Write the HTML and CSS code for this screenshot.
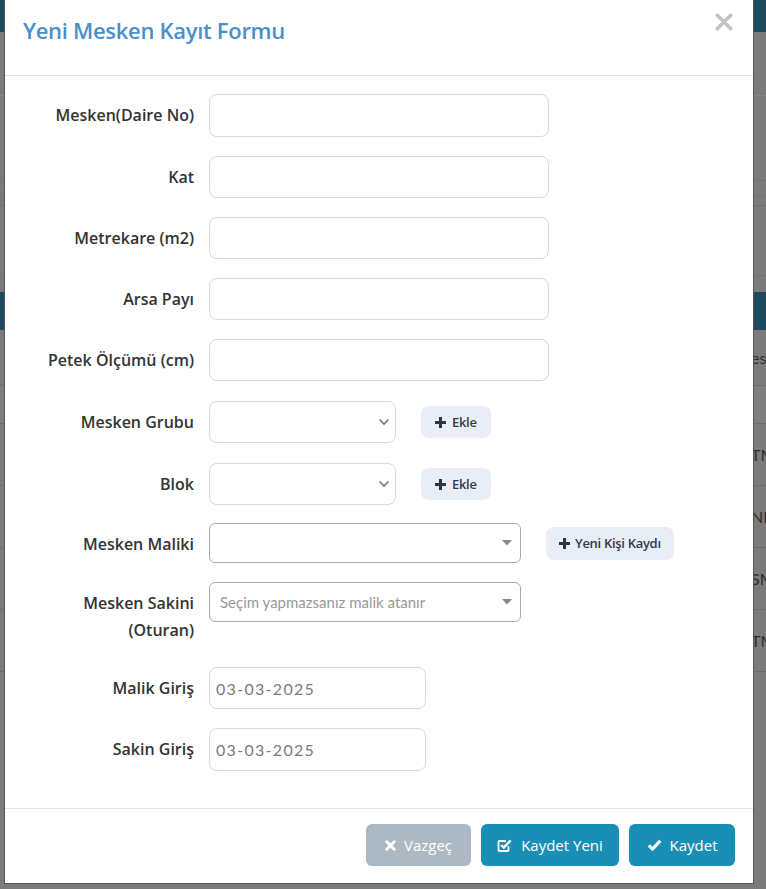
FILE: index.html
```html
<!DOCTYPE html>
<html lang="tr">
<head>
<meta charset="utf-8">
<title>Yeni Mesken Kayıt Formu</title>
<link rel="stylesheet" href="styles.css">
</head>
<body>
<div class="bg-page">
  <div class="bg-nav"></div>
  <div class="bg-s bg-s1"></div>
  <div class="bg-s bg-s2"></div>
  <div class="bg-s bg-s3"></div>
  <div class="bg-s bg-s4"></div>
  <div class="bg-s bg-s5"></div>
  <div class="bg-s bg-s6"></div>
  <div class="bg-band"></div>
  <div class="bg-row bg-head"><span>es</span></div>
  <div class="bg-row bg-filter"></div>
  <div class="bg-row"><span>TM</span></div>
  <div class="bg-row"><span>NES</span></div>
  <div class="bg-row"><span>SM</span></div>
  <div class="bg-row"><span>TM</span></div>
</div>

<div class="modal">
  <div class="modal-header">
    <h4 class="modal-title">Yeni Mesken Kayıt Formu</h4>
    <button class="close" type="button" aria-label="Kapat">
      <svg width="18" height="18" viewBox="0 0 18 18"><path d="M2.5 2.5 L15.5 15.5 M15.5 2.5 L2.5 15.5" stroke="#c2c2c2" stroke-width="3.4" stroke-linecap="square"/></svg>
    </button>
  </div>

  <div class="modal-body">
    <div class="frow first">
      <label class="flabel">Mesken(Daire No)</label>
      <input class="fc fc-text fc-tall" type="text">
    </div>
    <div class="frow">
      <label class="flabel">Kat</label>
      <input class="fc fc-text" type="text">
    </div>
    <div class="frow">
      <label class="flabel">Metrekare (m2)</label>
      <input class="fc fc-text" type="text">
    </div>
    <div class="frow">
      <label class="flabel">Arsa Payı</label>
      <input class="fc fc-text" type="text">
    </div>
    <div class="frow">
      <label class="flabel">Petek Ölçümü (cm)</label>
      <input class="fc fc-text" type="text">
    </div>
    <div class="frow sel-row">
      <label class="flabel">Mesken Grubu</label>
      <div class="ctl-line">
        <div class="fc fc-select">
          <svg class="chev" width="12" height="8" viewBox="0 0 12 8"><path d="M1.5 1.5 L6 6 L10.5 1.5" fill="none" stroke="#777" stroke-width="1.6"/></svg>
        </div>
        <button class="btn-add" type="button"><svg width="11" height="11" viewBox="0 0 11 11"><path d="M4 0h3v4h4v3H7v4H4V7H0V4h4z" fill="#2b3545"/></svg>Ekle</button>
      </div>
    </div>
    <div class="frow sel-row">
      <label class="flabel">Blok</label>
      <div class="ctl-line">
        <div class="fc fc-select">
          <svg class="chev" width="12" height="8" viewBox="0 0 12 8"><path d="M1.5 1.5 L6 6 L10.5 1.5" fill="none" stroke="#777" stroke-width="1.6"/></svg>
        </div>
        <button class="btn-add" type="button"><svg width="11" height="11" viewBox="0 0 11 11"><path d="M4 0h3v4h4v3H7v4H4V7H0V4h4z" fill="#2b3545"/></svg>Ekle</button>
      </div>
    </div>
    <div class="frow tight">
      <label class="flabel">Mesken Maliki</label>
      <div class="ctl-line">
        <div class="fc fc-s2">
          <span class="s2-text"></span>
          <svg class="tri" width="10" height="6" viewBox="0 0 10 6"><path d="M0 0 H10 L5 5.5z" fill="#888"/></svg>
        </div>
        <button class="btn-add btn-person" type="button"><svg width="11" height="11" viewBox="0 0 11 11"><path d="M4 0h3v4h4v3H7v4H4V7H0V4h4z" fill="#2b3545"/></svg>Yeni Kişi Kaydı</button>
      </div>
    </div>
    <div class="frow sakini">
      <label class="flabel">Mesken Sakini (Oturan)</label>
      <div class="ctl-line">
        <div class="fc fc-s2">
          <span class="s2-text s2-ph">Seçim yapmazsanız malik atanır</span>
          <svg class="tri" width="10" height="6" viewBox="0 0 10 6"><path d="M0 0 H10 L5 5.5z" fill="#888"/></svg>
        </div>
      </div>
    </div>
    <div class="frow">
      <label class="flabel">Malik Giriş</label>
      <input class="fc fc-date" type="text" value="03-03-2025">
    </div>
    <div class="frow last">
      <label class="flabel">Sakin Giriş</label>
      <input class="fc fc-date fc-tall" type="text" value="03-03-2025">
    </div>
  </div>

  <div class="modal-footer">
    <button class="btn btn-grey" type="button">
      <svg width="11" height="11" viewBox="0 0 11 11"><path d="M1.8 1.8 L9.2 9.2 M9.2 1.8 L1.8 9.2" stroke="#fff" stroke-width="3" stroke-linecap="round"/></svg>
      Vazgeç
    </button>
    <button class="btn btn-blue" type="button">
      <svg width="16" height="15" viewBox="0 0 16 15"><path d="M11.5 8.2 V12.2 Q11.5 13 10.7 13 H2.3 Q1.5 13 1.5 12.2 V3.8 Q1.5 3 2.3 3 H9" fill="none" stroke="#fff" stroke-width="1.8"/><path d="M4.2 7.2 L6.8 9.6 L13.6 2.4" fill="none" stroke="#fff" stroke-width="2.4"/></svg>
      Kaydet Yeni
    </button>
    <button class="btn btn-blue" type="button">
      <svg width="15" height="12" viewBox="0 0 15 12"><path d="M1.8 6.4 L5.6 10 L13.2 1.8" fill="none" stroke="#fff" stroke-width="3.2" stroke-linejoin="round"/></svg>
      Kaydet
    </button>
  </div>
</div>
</body>
</html>
```

FILE: styles.css
```css
* { box-sizing: border-box; }

html, body {
  margin: 0;
  padding: 0;
  height: 889px;
  overflow: hidden;
}

body {
  background: #7b7b7b;
  font-family: "Open Sans", Lato, "Liberation Sans", sans-serif;
  position: relative;
}

/* ---------- dimmed page behind the modal ---------- */
.bg-page {
  width: 766px;
}
.bg-nav { height: 32px; background: #1e4a5f; }
.bg-s { background: #7b7b7b; border-bottom: 1px solid #6f6f6f; }
.bg-s1 { height: 64px; border-bottom: 1px dotted #8e8e8e; }
.bg-s2 { height: 85px; border-bottom-color: #727272; }
.bg-s3 { height: 15px; border-bottom-color: #737373; }
.bg-s4 { height: 10px; }
.bg-s5 { height: 70px; border-bottom-color: #727272; }
.bg-s6 { height: 16px; border-bottom: 0; }
.bg-band { height: 38px; background: #1e4a5f; }
.bg-row {
  height: 62px;
  border-bottom: 1px solid #6c6c6c;
  display: flex;
  align-items: center;
  padding-left: 751px;
  font-family: Lato, sans-serif;
  font-size: 16px;
  color: #2e2e2e;
  white-space: nowrap;
  overflow: hidden;
}
.bg-head { height: 56px; }
.bg-filter { height: 38px; background: #7e7e80; }

/* ---------- modal ---------- */
.modal {
  position: absolute;
  top: -1px;
  left: 4px;
  width: 750px;
  background: #fff;
  border: 1px solid #555;
  display: flex;
  flex-direction: column;
}

.modal-header {
  height: 76px;
  border-bottom: 1px solid #e5e5e5;
  display: flex;
  align-items: flex-start;
  justify-content: space-between;
  padding: 0 20px 0 18px;
}
.modal-title {
  margin: 15px 0 0;
  font-size: 22px;
  font-weight: 600;
  color: #4a8fcc;
  letter-spacing: -0.3px;
}
.close {
  margin-top: 13px;
  padding: 0;
  border: 0;
  background: none;
  width: 18px;
  height: 18px;
  display: block;
}
.close svg { display: block; }

.modal-body {
  padding: 18px 0 37px;
  display: flex;
  flex-direction: column;
  gap: 19px;
}

.frow {
  display: grid;
  grid-template-columns: 189px auto;
  column-gap: 15px;
  align-items: start;
  justify-items: start;
}
.sel-row { margin-top: 1px; }
.tight { margin-top: -1px; }

.flabel {
  justify-self: end;
  text-align: right;
  font-size: 16px;
  font-weight: 600;
  color: #333;
  line-height: 27px;
  padding: 8px 0 4px;
  letter-spacing: 0;
}
.sakini .flabel { width: 130px; }

.fc {
  display: block;
  height: 42px;
  border: 1px solid #d9d9d9;
  border-radius: 8px;
  background: #fff;
  font-family: Lato, "Open Sans", sans-serif;
  font-size: 15px;
  color: #555;
  margin: 0;
  outline: none;
}
.fc-tall { height: 43px; }
.fc-text { width: 340px; }
.fc-date {
  width: 217px;
  padding: 0 6px;
  color: #7a7a7a;
  font-size: 16px;
  letter-spacing: 1.3px;
}

.ctl-line {
  display: flex;
  align-items: center;
  gap: 25px;
}

.fc-select {
  width: 187px;
  display: flex;
  align-items: center;
  justify-content: flex-end;
  padding-right: 5px;
}
.chev { display: block; }

.fc-s2 {
  width: 312px;
  height: 40px;
  border-color: #aaa;
  border-radius: 6px;
  display: flex;
  align-items: center;
  justify-content: space-between;
  padding: 0 8px 0 10px;
}
.s2-ph { color: #999; font-size: 15px; }
.tri { display: block; }

.btn-add {
  height: 32px;
  padding: 0 14px 0 14px;
  border: 0;
  border-radius: 8px;
  background: #e9eef6;
  color: #2f3b4c;
  font-family: "Open Sans", Lato, sans-serif;
  font-size: 13px;
  font-weight: 600;
  display: flex;
  align-items: center;
  gap: 6px;
  letter-spacing: -0.3px;
}
.btn-add svg { display: block; }
.btn-person { height: 33px; padding: 0 13px; gap: 5px; }

.modal-footer {
  border-top: 1px solid #e5e5e5;
  padding: 15px 18px 17px;
  display: flex;
  justify-content: flex-end;
  gap: 10px;
}
.btn {
  height: 42px;
  border: 0;
  border-radius: 6px;
  color: #fff;
  font-family: "Open Sans", Lato, sans-serif;
  font-size: 15px;
  display: flex;
  align-items: center;
  justify-content: center;
  gap: 8px;
  padding: 0;
}
.btn svg { display: block; }
.btn-grey { background: #acb9c3; width: 105px; }
.btn-blue { background: #1a8fb6; }
.btn-blue:nth-child(2) { width: 138px; }
.btn-blue:nth-child(3) { width: 106px; }
```
